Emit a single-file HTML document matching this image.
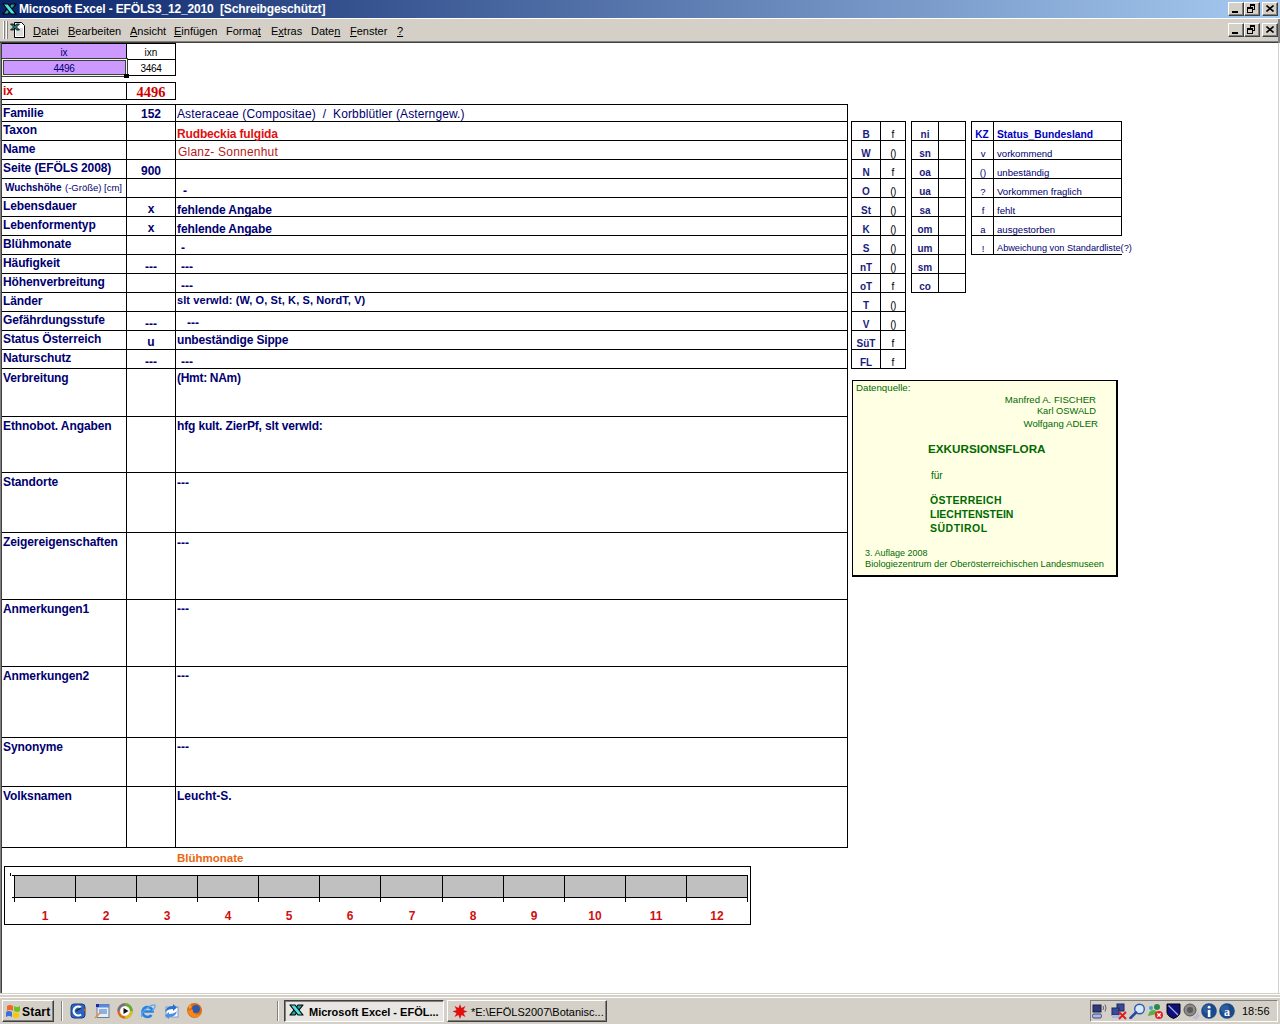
<!DOCTYPE html>
<html><head><meta charset="utf-8">
<style>
*{margin:0;padding:0;box-sizing:border-box}
html,body{width:1280px;height:1024px;overflow:hidden;background:#fff;font-family:"Liberation Sans",sans-serif}
.a{position:absolute}
.t{position:absolute;white-space:pre;line-height:1}
u{text-decoration:underline;text-underline-offset:1px}
</style></head><body>

<div class="a" style="left:0px;top:0px;width:1280px;height:18px;background:linear-gradient(to right,#0a246a,#a6caf0);"></div>
<svg class="a" style="left:2px;top:3px" width="16" height="13" viewBox="0 0 16 13"><path d="M9 1h5L6 11H1z" fill="#2aa0a0" stroke="#000" stroke-width="1.2" stroke-linejoin="round"/>
<path d="M1 1h5l8 10H9z" fill="#48e4e4" stroke="#000" stroke-width="1.2" stroke-linejoin="round"/></svg>
<div class="t" style="left:19px;top:2px;font:bold 12px 'Liberation Sans',sans-serif;color:#fff;letter-spacing:-0.15px">Microsoft Excel - EFÖLS3_12_2010  [Schreibgeschützt]</div>
<div class="a" style="left:1228px;top:2px;width:16px;height:14px;background:#d4d0c8;border-top:1px solid #fff;border-left:1px solid #fff;border-right:1px solid #404040;border-bottom:1px solid #404040;box-shadow:inset -1px -1px 0 #808080"></div>
<div class="a" style="left:1232px;top:11px;width:6px;height:2px;background:#000;"></div>
<div class="a" style="left:1244px;top:2px;width:16px;height:14px;background:#d4d0c8;border-top:1px solid #fff;border-left:1px solid #fff;border-right:1px solid #404040;border-bottom:1px solid #404040;box-shadow:inset -1px -1px 0 #808080"></div>
<div class="a" style="left:1250px;top:4px;width:5px;height:6px;border:1px solid #000;border-top-width:2px"></div>
<div class="a" style="left:1247px;top:7px;width:6px;height:6px;border:1px solid #000;border-top-width:2px;background:#d4d0c8"></div>
<div class="a" style="left:1262px;top:2px;width:16px;height:14px;background:#d4d0c8;border-top:1px solid #fff;border-left:1px solid #fff;border-right:1px solid #404040;border-bottom:1px solid #404040;box-shadow:inset -1px -1px 0 #808080"></div>
<svg class="a" style="left:1266px;top:5px" width="8" height="7" viewBox="0 0 8 7"><path d="M0.5 0.5L7.5 6.5M7.5 0.5L0.5 6.5" stroke="#000" stroke-width="1.6"/></svg>
<div class="a" style="left:0px;top:18px;width:1280px;height:1px;background:#d4d0c8;"></div>
<div class="a" style="left:0px;top:19px;width:1280px;height:22px;background:#d4d0c8;"></div>
<div class="a" style="left:0px;top:18px;width:1280px;height:1px;background:#fff;"></div>
<div class="a" style="left:3px;top:21px;width:1px;height:18px;background:#fff;"></div>
<div class="a" style="left:4px;top:21px;width:1px;height:18px;background:#808080;"></div>
<div class="a" style="left:6px;top:21px;width:1px;height:18px;background:#fff;"></div>
<div class="a" style="left:7px;top:21px;width:1px;height:18px;background:#808080;"></div>
<svg class="a" style="left:10px;top:22px" width="18" height="17" viewBox="0 0 18 17">
<path d="M4.5 0.5h7l3 3v12h-10z" fill="#fff" stroke="#000"/>
<path d="M6 7h7M6 9h7M6 11h7M6 13h7" stroke="#b8b8b8"/>
<path d="M0.5 2h3l1.5 2 1.5-2h3l-3 3 3 3h-3l-1.5-2-1.5 2h-3l3-3z" fill="#1a8080" stroke="#000" stroke-width="0.8"/>
</svg>
<div class="t" style="left:33px;top:25px;font:normal 11px 'Liberation Sans',sans-serif;color:#000;"><u>D</u>atei</div>
<div class="t" style="left:68px;top:25px;font:normal 11px 'Liberation Sans',sans-serif;color:#000;"><u>B</u>earbeiten</div>
<div class="t" style="left:130px;top:25px;font:normal 11px 'Liberation Sans',sans-serif;color:#000;"><u>A</u>nsicht</div>
<div class="t" style="left:174px;top:25px;font:normal 11px 'Liberation Sans',sans-serif;color:#000;"><u>E</u>infügen</div>
<div class="t" style="left:226px;top:25px;font:normal 11px 'Liberation Sans',sans-serif;color:#000;">Forma<u>t</u></div>
<div class="t" style="left:271px;top:25px;font:normal 11px 'Liberation Sans',sans-serif;color:#000;">E<u>x</u>tras</div>
<div class="t" style="left:311px;top:25px;font:normal 11px 'Liberation Sans',sans-serif;color:#000;">Date<u>n</u></div>
<div class="t" style="left:350px;top:25px;font:normal 11px 'Liberation Sans',sans-serif;color:#000;"><u>F</u>enster</div>
<div class="t" style="left:397px;top:25px;font:normal 11px 'Liberation Sans',sans-serif;color:#000;"><u>?</u></div>
<div class="a" style="left:1228px;top:23px;width:16px;height:14px;background:#d4d0c8;border-top:1px solid #fff;border-left:1px solid #fff;border-right:1px solid #404040;border-bottom:1px solid #404040;box-shadow:inset -1px -1px 0 #808080"></div>
<div class="a" style="left:1232px;top:32px;width:6px;height:2px;background:#000;"></div>
<div class="a" style="left:1244px;top:23px;width:16px;height:14px;background:#d4d0c8;border-top:1px solid #fff;border-left:1px solid #fff;border-right:1px solid #404040;border-bottom:1px solid #404040;box-shadow:inset -1px -1px 0 #808080"></div>
<div class="a" style="left:1250px;top:25px;width:5px;height:6px;border:1px solid #000;border-top-width:2px"></div>
<div class="a" style="left:1247px;top:28px;width:6px;height:6px;border:1px solid #000;border-top-width:2px;background:#d4d0c8"></div>
<div class="a" style="left:1262px;top:23px;width:16px;height:14px;background:#d4d0c8;border-top:1px solid #fff;border-left:1px solid #fff;border-right:1px solid #404040;border-bottom:1px solid #404040;box-shadow:inset -1px -1px 0 #808080"></div>
<svg class="a" style="left:1266px;top:26px" width="8" height="7" viewBox="0 0 8 7"><path d="M0.5 0.5L7.5 6.5M7.5 0.5L0.5 6.5" stroke="#000" stroke-width="1.6"/></svg>
<div class="a" style="left:0px;top:40px;width:1280px;height:1px;background:#d4d0c8;"></div>
<div class="a" style="left:0px;top:41px;width:1278px;height:1px;background:#808080;"></div>
<div class="a" style="left:0px;top:42px;width:1278px;height:1px;background:#404040;"></div>
<div class="a" style="left:1278px;top:19px;width:2px;height:24px;background:#808080;"></div>
<div class="a" style="left:0px;top:43px;width:1px;height:950px;background:#808080;"></div>
<div class="a" style="left:1px;top:43px;width:1px;height:950px;background:#404040;"></div>
<div class="a" style="left:1278px;top:43px;width:1px;height:950px;background:#d4d0c8;"></div>
<div class="a" style="left:1279px;top:43px;width:1px;height:950px;background:#fff;"></div>
<div class="a" style="left:0px;top:993px;width:1280px;height:1px;background:#d4d0c8;"></div>
<div class="a" style="left:0px;top:994px;width:1280px;height:1px;background:#fff;"></div>
<div class="a" style="left:2px;top:43px;width:124px;height:16px;background:#cc99ff;"></div>
<div class="a" style="left:2px;top:43px;width:174px;height:1px;background:#000;"></div>
<div class="a" style="left:126px;top:59px;width:50px;height:1px;background:#000;"></div>
<div class="a" style="left:2px;top:75px;width:174px;height:1px;background:#000;"></div>
<div class="a" style="left:126px;top:43px;width:1px;height:17px;background:#000;"></div>
<div class="a" style="left:175px;top:43px;width:1px;height:33px;background:#000;"></div>
<div class="a" style="left:2px;top:59px;width:124px;height:17px;background:#cc99ff;"></div>
<div class="t" style="left:-36px;width:200px;text-align:center;top:47px;font:normal 10px 'Liberation Sans',sans-serif;color:#000070;">ix</div>
<div class="t" style="left:51px;width:200px;text-align:center;top:47px;font:normal 10px 'Liberation Sans',sans-serif;color:#000;">ixn</div>
<div class="t" style="left:-36px;width:200px;text-align:center;top:63px;font:normal 10px 'Liberation Sans',sans-serif;color:#000070;letter-spacing:-0.3px">4496</div>
<div class="t" style="left:51px;width:200px;text-align:center;top:63px;font:normal 10px 'Liberation Sans',sans-serif;color:#000;letter-spacing:-0.3px">3464</div>
<div class="a" style="left:1px;top:58px;width:127px;height:19px;border:1px solid #3a3a3a;box-shadow:inset 0 0 0 1px #f0f8e0, inset 0 0 0 2px #404040"></div>
<div class="a" style="left:124px;top:74px;width:5px;height:4px;background:#000;"></div>
<div class="a" style="left:2px;top:82px;width:174px;height:1px;background:#000;"></div>
<div class="a" style="left:2px;top:99px;width:174px;height:1px;background:#000;"></div>
<div class="a" style="left:126px;top:82px;width:1px;height:18px;background:#000;"></div>
<div class="a" style="left:175px;top:82px;width:1px;height:18px;background:#000;"></div>
<div class="t" style="left:3px;top:84px;font:bold 12px 'Liberation Sans',sans-serif;color:#d00000;">ix</div>
<div class="t" style="left:51px;width:200px;text-align:center;top:84px;font:bold 14.5px 'Liberation Serif',sans-serif;color:#d00000;">4496</div>
<div class="a" style="left:2px;top:104px;width:846px;height:1px;background:#000;"></div>
<div class="a" style="left:2px;top:121px;width:846px;height:1px;background:#000;"></div>
<div class="a" style="left:2px;top:140px;width:846px;height:1px;background:#000;"></div>
<div class="a" style="left:2px;top:159px;width:846px;height:1px;background:#000;"></div>
<div class="a" style="left:2px;top:178px;width:846px;height:1px;background:#000;"></div>
<div class="a" style="left:2px;top:197px;width:846px;height:1px;background:#000;"></div>
<div class="a" style="left:2px;top:216px;width:846px;height:1px;background:#000;"></div>
<div class="a" style="left:2px;top:235px;width:846px;height:1px;background:#000;"></div>
<div class="a" style="left:2px;top:254px;width:846px;height:1px;background:#000;"></div>
<div class="a" style="left:2px;top:273px;width:846px;height:1px;background:#000;"></div>
<div class="a" style="left:2px;top:292px;width:846px;height:1px;background:#000;"></div>
<div class="a" style="left:2px;top:311px;width:846px;height:1px;background:#000;"></div>
<div class="a" style="left:2px;top:330px;width:846px;height:1px;background:#000;"></div>
<div class="a" style="left:2px;top:349px;width:846px;height:1px;background:#000;"></div>
<div class="a" style="left:2px;top:368px;width:846px;height:1px;background:#000;"></div>
<div class="a" style="left:2px;top:416px;width:846px;height:1px;background:#000;"></div>
<div class="a" style="left:2px;top:472px;width:846px;height:1px;background:#000;"></div>
<div class="a" style="left:2px;top:532px;width:846px;height:1px;background:#000;"></div>
<div class="a" style="left:2px;top:599px;width:846px;height:1px;background:#000;"></div>
<div class="a" style="left:2px;top:666px;width:846px;height:1px;background:#000;"></div>
<div class="a" style="left:2px;top:737px;width:846px;height:1px;background:#000;"></div>
<div class="a" style="left:2px;top:786px;width:846px;height:1px;background:#000;"></div>
<div class="a" style="left:2px;top:847px;width:846px;height:1px;background:#000;"></div>
<div class="a" style="left:126px;top:104px;width:1px;height:744px;background:#000;"></div>
<div class="a" style="left:175px;top:104px;width:1px;height:744px;background:#000;"></div>
<div class="a" style="left:847px;top:104px;width:1px;height:744px;background:#000;"></div>
<div class="t" style="left:3px;top:106px;font:bold 12px 'Liberation Sans',sans-serif;color:#000070;letter-spacing:-0.1px">Familie</div>
<div class="t" style="left:3px;top:123px;font:bold 12px 'Liberation Sans',sans-serif;color:#000070;letter-spacing:-0.1px">Taxon</div>
<div class="t" style="left:3px;top:142px;font:bold 12px 'Liberation Sans',sans-serif;color:#000070;letter-spacing:-0.1px">Name</div>
<div class="t" style="left:3px;top:161px;font:bold 12px 'Liberation Sans',sans-serif;color:#000070;letter-spacing:-0.1px">Seite (EFÖLS 2008)</div>
<div class="t" style="left:5px;top:182px;font:bold 10px 'Liberation Sans',sans-serif;color:#000070;">Wuchshöhe</div>
<div class="t" style="left:65px;top:182px;font:normal 9.5px 'Liberation Sans',sans-serif;color:#000070;">(-Größe) [cm]</div>
<div class="t" style="left:3px;top:199px;font:bold 12px 'Liberation Sans',sans-serif;color:#000070;letter-spacing:-0.1px">Lebensdauer</div>
<div class="t" style="left:3px;top:218px;font:bold 12px 'Liberation Sans',sans-serif;color:#000070;letter-spacing:-0.1px">Lebenformentyp</div>
<div class="t" style="left:3px;top:237px;font:bold 12px 'Liberation Sans',sans-serif;color:#000070;letter-spacing:-0.1px">Blühmonate</div>
<div class="t" style="left:3px;top:256px;font:bold 12px 'Liberation Sans',sans-serif;color:#000070;letter-spacing:-0.1px">Häufigkeit</div>
<div class="t" style="left:3px;top:275px;font:bold 12px 'Liberation Sans',sans-serif;color:#000070;letter-spacing:-0.1px">Höhenverbreitung</div>
<div class="t" style="left:3px;top:294px;font:bold 12px 'Liberation Sans',sans-serif;color:#000070;letter-spacing:-0.1px">Länder</div>
<div class="t" style="left:3px;top:313px;font:bold 12px 'Liberation Sans',sans-serif;color:#000070;letter-spacing:-0.1px">Gefährdungsstufe</div>
<div class="t" style="left:3px;top:332px;font:bold 12px 'Liberation Sans',sans-serif;color:#000070;letter-spacing:-0.1px">Status Österreich</div>
<div class="t" style="left:3px;top:351px;font:bold 12px 'Liberation Sans',sans-serif;color:#000070;letter-spacing:-0.1px">Naturschutz</div>
<div class="t" style="left:3px;top:371px;font:bold 12px 'Liberation Sans',sans-serif;color:#000070;letter-spacing:-0.1px">Verbreitung</div>
<div class="t" style="left:3px;top:419px;font:bold 12px 'Liberation Sans',sans-serif;color:#000070;letter-spacing:-0.1px">Ethnobot. Angaben</div>
<div class="t" style="left:3px;top:475px;font:bold 12px 'Liberation Sans',sans-serif;color:#000070;letter-spacing:-0.1px">Standorte</div>
<div class="t" style="left:3px;top:535px;font:bold 12px 'Liberation Sans',sans-serif;color:#000070;letter-spacing:-0.1px">Zeigereigenschaften</div>
<div class="t" style="left:3px;top:602px;font:bold 12px 'Liberation Sans',sans-serif;color:#000070;letter-spacing:-0.1px">Anmerkungen1</div>
<div class="t" style="left:3px;top:669px;font:bold 12px 'Liberation Sans',sans-serif;color:#000070;letter-spacing:-0.1px">Anmerkungen2</div>
<div class="t" style="left:3px;top:740px;font:bold 12px 'Liberation Sans',sans-serif;color:#000070;letter-spacing:-0.1px">Synonyme</div>
<div class="t" style="left:3px;top:789px;font:bold 12px 'Liberation Sans',sans-serif;color:#000070;letter-spacing:-0.1px">Volksnamen</div>
<div class="t" style="left:51px;width:200px;text-align:center;top:107px;font:bold 12px 'Liberation Sans',sans-serif;color:#000070;">152</div>
<div class="t" style="left:51px;width:200px;text-align:center;top:164px;font:bold 12px 'Liberation Sans',sans-serif;color:#000070;">900</div>
<div class="t" style="left:51px;width:200px;text-align:center;top:202px;font:bold 12px 'Liberation Sans',sans-serif;color:#000070;">x</div>
<div class="t" style="left:51px;width:200px;text-align:center;top:221px;font:bold 12px 'Liberation Sans',sans-serif;color:#000070;">x</div>
<div class="t" style="left:51px;width:200px;text-align:center;top:260px;font:bold 12px 'Liberation Sans',sans-serif;color:#000070;">---</div>
<div class="t" style="left:51px;width:200px;text-align:center;top:317px;font:bold 12px 'Liberation Sans',sans-serif;color:#000070;">---</div>
<div class="t" style="left:51px;width:200px;text-align:center;top:335px;font:bold 12px 'Liberation Sans',sans-serif;color:#000070;">u</div>
<div class="t" style="left:51px;width:200px;text-align:center;top:355px;font:bold 12px 'Liberation Sans',sans-serif;color:#000070;">---</div>
<div class="t" style="left:177px;top:107px;font:normal 12px 'Liberation Sans',sans-serif;color:#000070;letter-spacing:0.12px">Asteraceae (Compositae)  /  Korbblütler (Asterngew.)</div>
<div class="t" style="left:177px;top:127px;font:bold 12px 'Liberation Sans',sans-serif;color:#e01010;letter-spacing:-0.15px">Rudbeckia fulgida</div>
<div class="t" style="left:178px;top:145px;font:normal 12px 'Liberation Sans',sans-serif;color:#b42020;letter-spacing:0.2px">Glanz- Sonnenhut</div>
<div class="t" style="left:183px;top:184px;font:bold 12px 'Liberation Sans',sans-serif;color:#000070;">-</div>
<div class="t" style="left:177px;top:203px;font:bold 12px 'Liberation Sans',sans-serif;color:#000070;letter-spacing:-0.1px">fehlende Angabe</div>
<div class="t" style="left:177px;top:222px;font:bold 12px 'Liberation Sans',sans-serif;color:#000070;letter-spacing:-0.1px">fehlende Angabe</div>
<div class="t" style="left:181px;top:241px;font:bold 12px 'Liberation Sans',sans-serif;color:#000070;">-</div>
<div class="t" style="left:181px;top:260px;font:bold 12px 'Liberation Sans',sans-serif;color:#000070;">---</div>
<div class="t" style="left:181px;top:279px;font:bold 12px 'Liberation Sans',sans-serif;color:#000070;">---</div>
<div class="t" style="left:177px;top:294px;font:bold 11px 'Liberation Sans',sans-serif;color:#000070;letter-spacing:0.1px">slt verwld: (W, O, St, K, S, NordT, V)</div>
<div class="t" style="left:187px;top:316px;font:bold 12px 'Liberation Sans',sans-serif;color:#000070;">---</div>
<div class="t" style="left:177px;top:333px;font:bold 12px 'Liberation Sans',sans-serif;color:#000070;letter-spacing:-0.15px">unbeständige Sippe</div>
<div class="t" style="left:181px;top:355px;font:bold 12px 'Liberation Sans',sans-serif;color:#000070;">---</div>
<div class="t" style="left:177px;top:371px;font:bold 12px 'Liberation Sans',sans-serif;color:#000070;letter-spacing:-0.3px">(Hmt: NAm)</div>
<div class="t" style="left:177px;top:419px;font:bold 12px 'Liberation Sans',sans-serif;color:#000070;letter-spacing:-0.15px">hfg kult. ZierPf, slt verwld:</div>
<div class="t" style="left:177px;top:476px;font:bold 12px 'Liberation Sans',sans-serif;color:#000070;">---</div>
<div class="t" style="left:177px;top:536px;font:bold 12px 'Liberation Sans',sans-serif;color:#000070;">---</div>
<div class="t" style="left:177px;top:602px;font:bold 12px 'Liberation Sans',sans-serif;color:#000070;">---</div>
<div class="t" style="left:177px;top:669px;font:bold 12px 'Liberation Sans',sans-serif;color:#000070;">---</div>
<div class="t" style="left:177px;top:740px;font:bold 12px 'Liberation Sans',sans-serif;color:#000070;">---</div>
<div class="t" style="left:177px;top:789px;font:bold 12px 'Liberation Sans',sans-serif;color:#000070;">Leucht-S.</div>
<div class="a" style="left:851px;top:121px;width:55px;height:1px;background:#000;"></div>
<div class="a" style="left:851px;top:140px;width:55px;height:1px;background:#000;"></div>
<div class="a" style="left:851px;top:159px;width:55px;height:1px;background:#000;"></div>
<div class="a" style="left:851px;top:178px;width:55px;height:1px;background:#000;"></div>
<div class="a" style="left:851px;top:197px;width:55px;height:1px;background:#000;"></div>
<div class="a" style="left:851px;top:216px;width:55px;height:1px;background:#000;"></div>
<div class="a" style="left:851px;top:235px;width:55px;height:1px;background:#000;"></div>
<div class="a" style="left:851px;top:254px;width:55px;height:1px;background:#000;"></div>
<div class="a" style="left:851px;top:273px;width:55px;height:1px;background:#000;"></div>
<div class="a" style="left:851px;top:292px;width:55px;height:1px;background:#000;"></div>
<div class="a" style="left:851px;top:311px;width:55px;height:1px;background:#000;"></div>
<div class="a" style="left:851px;top:330px;width:55px;height:1px;background:#000;"></div>
<div class="a" style="left:851px;top:349px;width:55px;height:1px;background:#000;"></div>
<div class="a" style="left:851px;top:368px;width:55px;height:1px;background:#000;"></div>
<div class="a" style="left:851px;top:121px;width:1px;height:248px;background:#000;"></div>
<div class="a" style="left:880px;top:121px;width:1px;height:248px;background:#000;"></div>
<div class="a" style="left:905px;top:121px;width:1px;height:248px;background:#000;"></div>
<div class="t" style="left:766px;width:200px;text-align:center;top:129px;font:bold 10px 'Liberation Sans',sans-serif;color:#1c1c7c;">B</div>
<div class="t" style="left:793px;width:200px;text-align:center;top:129px;font:normal 10px 'Liberation Sans',sans-serif;color:#000;">f</div>
<div class="t" style="left:766px;width:200px;text-align:center;top:148px;font:bold 10px 'Liberation Sans',sans-serif;color:#1c1c7c;">W</div>
<div class="t" style="left:793px;width:200px;text-align:center;top:148px;font:normal 10px 'Liberation Sans',sans-serif;color:#000;letter-spacing:-0.6px">()</div>
<div class="t" style="left:766px;width:200px;text-align:center;top:167px;font:bold 10px 'Liberation Sans',sans-serif;color:#1c1c7c;">N</div>
<div class="t" style="left:793px;width:200px;text-align:center;top:167px;font:normal 10px 'Liberation Sans',sans-serif;color:#000;">f</div>
<div class="t" style="left:766px;width:200px;text-align:center;top:186px;font:bold 10px 'Liberation Sans',sans-serif;color:#1c1c7c;">O</div>
<div class="t" style="left:793px;width:200px;text-align:center;top:186px;font:normal 10px 'Liberation Sans',sans-serif;color:#000;letter-spacing:-0.6px">()</div>
<div class="t" style="left:766px;width:200px;text-align:center;top:205px;font:bold 10px 'Liberation Sans',sans-serif;color:#1c1c7c;">St</div>
<div class="t" style="left:793px;width:200px;text-align:center;top:205px;font:normal 10px 'Liberation Sans',sans-serif;color:#000;letter-spacing:-0.6px">()</div>
<div class="t" style="left:766px;width:200px;text-align:center;top:224px;font:bold 10px 'Liberation Sans',sans-serif;color:#1c1c7c;">K</div>
<div class="t" style="left:793px;width:200px;text-align:center;top:224px;font:normal 10px 'Liberation Sans',sans-serif;color:#000;letter-spacing:-0.6px">()</div>
<div class="t" style="left:766px;width:200px;text-align:center;top:243px;font:bold 10px 'Liberation Sans',sans-serif;color:#1c1c7c;">S</div>
<div class="t" style="left:793px;width:200px;text-align:center;top:243px;font:normal 10px 'Liberation Sans',sans-serif;color:#000;letter-spacing:-0.6px">()</div>
<div class="t" style="left:766px;width:200px;text-align:center;top:262px;font:bold 10px 'Liberation Sans',sans-serif;color:#1c1c7c;">nT</div>
<div class="t" style="left:793px;width:200px;text-align:center;top:262px;font:normal 10px 'Liberation Sans',sans-serif;color:#000;letter-spacing:-0.6px">()</div>
<div class="t" style="left:766px;width:200px;text-align:center;top:281px;font:bold 10px 'Liberation Sans',sans-serif;color:#1c1c7c;">oT</div>
<div class="t" style="left:793px;width:200px;text-align:center;top:281px;font:normal 10px 'Liberation Sans',sans-serif;color:#000;">f</div>
<div class="t" style="left:766px;width:200px;text-align:center;top:300px;font:bold 10px 'Liberation Sans',sans-serif;color:#1c1c7c;">T</div>
<div class="t" style="left:793px;width:200px;text-align:center;top:300px;font:normal 10px 'Liberation Sans',sans-serif;color:#000;letter-spacing:-0.6px">()</div>
<div class="t" style="left:766px;width:200px;text-align:center;top:319px;font:bold 10px 'Liberation Sans',sans-serif;color:#1c1c7c;">V</div>
<div class="t" style="left:793px;width:200px;text-align:center;top:319px;font:normal 10px 'Liberation Sans',sans-serif;color:#000;letter-spacing:-0.6px">()</div>
<div class="t" style="left:766px;width:200px;text-align:center;top:338px;font:bold 10px 'Liberation Sans',sans-serif;color:#1c1c7c;">SüT</div>
<div class="t" style="left:793px;width:200px;text-align:center;top:338px;font:normal 10px 'Liberation Sans',sans-serif;color:#000;">f</div>
<div class="t" style="left:766px;width:200px;text-align:center;top:357px;font:bold 10px 'Liberation Sans',sans-serif;color:#1c1c7c;">FL</div>
<div class="t" style="left:793px;width:200px;text-align:center;top:357px;font:normal 10px 'Liberation Sans',sans-serif;color:#000;">f</div>
<div class="a" style="left:911px;top:121px;width:55px;height:1px;background:#000;"></div>
<div class="a" style="left:911px;top:140px;width:55px;height:1px;background:#000;"></div>
<div class="a" style="left:911px;top:159px;width:55px;height:1px;background:#000;"></div>
<div class="a" style="left:911px;top:178px;width:55px;height:1px;background:#000;"></div>
<div class="a" style="left:911px;top:197px;width:55px;height:1px;background:#000;"></div>
<div class="a" style="left:911px;top:216px;width:55px;height:1px;background:#000;"></div>
<div class="a" style="left:911px;top:235px;width:55px;height:1px;background:#000;"></div>
<div class="a" style="left:911px;top:254px;width:55px;height:1px;background:#000;"></div>
<div class="a" style="left:911px;top:273px;width:55px;height:1px;background:#000;"></div>
<div class="a" style="left:911px;top:292px;width:55px;height:1px;background:#000;"></div>
<div class="a" style="left:911px;top:121px;width:1px;height:172px;background:#000;"></div>
<div class="a" style="left:938px;top:121px;width:1px;height:172px;background:#000;"></div>
<div class="a" style="left:965px;top:121px;width:1px;height:172px;background:#000;"></div>
<div class="t" style="left:825px;width:200px;text-align:center;top:129px;font:bold 10px 'Liberation Sans',sans-serif;color:#1c1c7c;">ni</div>
<div class="t" style="left:825px;width:200px;text-align:center;top:148px;font:bold 10px 'Liberation Sans',sans-serif;color:#1c1c7c;">sn</div>
<div class="t" style="left:825px;width:200px;text-align:center;top:167px;font:bold 10px 'Liberation Sans',sans-serif;color:#1c1c7c;">oa</div>
<div class="t" style="left:825px;width:200px;text-align:center;top:186px;font:bold 10px 'Liberation Sans',sans-serif;color:#1c1c7c;">ua</div>
<div class="t" style="left:825px;width:200px;text-align:center;top:205px;font:bold 10px 'Liberation Sans',sans-serif;color:#1c1c7c;">sa</div>
<div class="t" style="left:825px;width:200px;text-align:center;top:224px;font:bold 10px 'Liberation Sans',sans-serif;color:#1c1c7c;">om</div>
<div class="t" style="left:825px;width:200px;text-align:center;top:243px;font:bold 10px 'Liberation Sans',sans-serif;color:#1c1c7c;">um</div>
<div class="t" style="left:825px;width:200px;text-align:center;top:262px;font:bold 10px 'Liberation Sans',sans-serif;color:#1c1c7c;">sm</div>
<div class="t" style="left:825px;width:200px;text-align:center;top:281px;font:bold 10px 'Liberation Sans',sans-serif;color:#1c1c7c;">co</div>
<div class="a" style="left:971px;top:121px;width:151px;height:1px;background:#000;"></div>
<div class="a" style="left:971px;top:140px;width:151px;height:1px;background:#000;"></div>
<div class="a" style="left:971px;top:159px;width:151px;height:1px;background:#000;"></div>
<div class="a" style="left:971px;top:178px;width:151px;height:1px;background:#000;"></div>
<div class="a" style="left:971px;top:197px;width:151px;height:1px;background:#000;"></div>
<div class="a" style="left:971px;top:216px;width:151px;height:1px;background:#000;"></div>
<div class="a" style="left:971px;top:235px;width:151px;height:1px;background:#000;"></div>
<div class="a" style="left:971px;top:254px;width:151px;height:1px;background:#000;"></div>
<div class="a" style="left:971px;top:121px;width:1px;height:134px;background:#000;"></div>
<div class="a" style="left:993px;top:121px;width:1px;height:134px;background:#000;"></div>
<div class="a" style="left:1121px;top:121px;width:1px;height:115px;background:#000;"></div>
<div class="t" style="left:882px;width:200px;text-align:center;top:129px;font:bold 10px 'Liberation Sans',sans-serif;color:#0000c0;">KZ</div>
<div class="t" style="left:997px;top:129px;font:bold 10.3px 'Liberation Sans',sans-serif;color:#0000c0;">Status_Bundesland</div>
<div class="t" style="left:883px;width:200px;text-align:center;top:148px;font:normal 9.5px 'Liberation Sans',sans-serif;color:#000070;">v</div>
<div class="t" style="left:997px;top:148px;font:normal 9.6px 'Liberation Sans',sans-serif;color:#000070;">vorkommend</div>
<div class="t" style="left:883px;width:200px;text-align:center;top:167px;font:normal 9.5px 'Liberation Sans',sans-serif;color:#000070;">()</div>
<div class="t" style="left:997px;top:167px;font:normal 9.6px 'Liberation Sans',sans-serif;color:#000070;">unbeständig</div>
<div class="t" style="left:883px;width:200px;text-align:center;top:186px;font:normal 9.5px 'Liberation Sans',sans-serif;color:#000070;">?</div>
<div class="t" style="left:997px;top:186px;font:normal 9.6px 'Liberation Sans',sans-serif;color:#000070;">Vorkommen fraglich</div>
<div class="t" style="left:883px;width:200px;text-align:center;top:205px;font:normal 9.5px 'Liberation Sans',sans-serif;color:#000070;">f</div>
<div class="t" style="left:997px;top:205px;font:normal 9.6px 'Liberation Sans',sans-serif;color:#000070;">fehlt</div>
<div class="t" style="left:883px;width:200px;text-align:center;top:224px;font:normal 9.5px 'Liberation Sans',sans-serif;color:#000070;">a</div>
<div class="t" style="left:997px;top:224px;font:normal 9.6px 'Liberation Sans',sans-serif;color:#000070;">ausgestorben</div>
<div class="t" style="left:883px;width:200px;text-align:center;top:243px;font:normal 9.5px 'Liberation Sans',sans-serif;color:#000070;">!</div>
<div class="t" style="left:997px;top:243px;font:normal 9.2px 'Liberation Sans',sans-serif;color:#000070;">Abweichung von Standardliste(?)</div>
<div class="a" style="left:852px;top:380px;width:266px;height:197px;background:#ffffe4;border:1px solid #000;border-right-width:2px;border-bottom-width:2px"></div>
<div class="t" style="left:856px;top:382px;font:normal 9.7px 'Liberation Sans',sans-serif;color:#006a00;">Datenquelle:</div>
<div class="t" style="left:696px;width:400px;text-align:right;top:394px;font:normal 9.6px 'Liberation Sans',sans-serif;color:#006a00;">Manfred A. FISCHER</div>
<div class="t" style="left:696px;width:400px;text-align:right;top:406px;font:normal 9.3px 'Liberation Sans',sans-serif;color:#006a00;">Karl OSWALD</div>
<div class="t" style="left:698px;width:400px;text-align:right;top:418px;font:normal 9.6px 'Liberation Sans',sans-serif;color:#006a00;">Wolfgang ADLER</div>
<div class="t" style="left:928px;top:442px;font:bold 11.7px 'Liberation Sans',sans-serif;color:#006a00;">EXKURSIONSFLORA</div>
<div class="t" style="left:931px;top:470px;font:normal 10px 'Liberation Sans',sans-serif;color:#006a00;">für</div>
<div class="t" style="left:930px;top:494px;font:bold 10.5px 'Liberation Sans',sans-serif;color:#006a00;letter-spacing:0.3px">ÖSTERREICH</div>
<div class="t" style="left:930px;top:508px;font:bold 10.5px 'Liberation Sans',sans-serif;color:#006a00;">LIECHTENSTEIN</div>
<div class="t" style="left:930px;top:522px;font:bold 10.5px 'Liberation Sans',sans-serif;color:#006a00;letter-spacing:0.5px">SÜDTIROL</div>
<div class="t" style="left:865px;top:548px;font:normal 9px 'Liberation Sans',sans-serif;color:#006a00;">3. Auflage 2008</div>
<div class="t" style="left:865px;top:559px;font:normal 9.28px 'Liberation Sans',sans-serif;color:#006a00;">Biologiezentrum der Oberösterreichischen Landesmuseen</div>
<div class="t" style="left:177px;top:852px;font:bold 11.5px 'Liberation Sans',sans-serif;color:#e86810;">Blühmonate</div>
<div class="a" style="left:4px;top:866px;width:747px;height:59px;border:1px solid #000"></div>
<div class="a" style="left:14px;top:875px;width:734px;height:23px;background:#c0c0c0;"></div>
<div class="a" style="left:14px;top:875px;width:734px;height:1px;background:#000;"></div>
<div class="a" style="left:14px;top:897px;width:734px;height:1px;background:#000;"></div>
<div class="a" style="left:14px;top:875px;width:1px;height:27px;background:#000;"></div>
<div class="t" style="left:-55px;width:200px;text-align:center;top:909px;font:bold 12px 'Liberation Sans',sans-serif;color:#d01010;">1</div>
<div class="a" style="left:75px;top:875px;width:1px;height:27px;background:#000;"></div>
<div class="t" style="left:6px;width:200px;text-align:center;top:909px;font:bold 12px 'Liberation Sans',sans-serif;color:#d01010;">2</div>
<div class="a" style="left:136px;top:875px;width:1px;height:27px;background:#000;"></div>
<div class="t" style="left:67px;width:200px;text-align:center;top:909px;font:bold 12px 'Liberation Sans',sans-serif;color:#d01010;">3</div>
<div class="a" style="left:197px;top:875px;width:1px;height:27px;background:#000;"></div>
<div class="t" style="left:128px;width:200px;text-align:center;top:909px;font:bold 12px 'Liberation Sans',sans-serif;color:#d01010;">4</div>
<div class="a" style="left:258px;top:875px;width:1px;height:27px;background:#000;"></div>
<div class="t" style="left:189px;width:200px;text-align:center;top:909px;font:bold 12px 'Liberation Sans',sans-serif;color:#d01010;">5</div>
<div class="a" style="left:319px;top:875px;width:1px;height:27px;background:#000;"></div>
<div class="t" style="left:250px;width:200px;text-align:center;top:909px;font:bold 12px 'Liberation Sans',sans-serif;color:#d01010;">6</div>
<div class="a" style="left:380px;top:875px;width:1px;height:27px;background:#000;"></div>
<div class="t" style="left:312px;width:200px;text-align:center;top:909px;font:bold 12px 'Liberation Sans',sans-serif;color:#d01010;">7</div>
<div class="a" style="left:442px;top:875px;width:1px;height:27px;background:#000;"></div>
<div class="t" style="left:373px;width:200px;text-align:center;top:909px;font:bold 12px 'Liberation Sans',sans-serif;color:#d01010;">8</div>
<div class="a" style="left:503px;top:875px;width:1px;height:27px;background:#000;"></div>
<div class="t" style="left:434px;width:200px;text-align:center;top:909px;font:bold 12px 'Liberation Sans',sans-serif;color:#d01010;">9</div>
<div class="a" style="left:564px;top:875px;width:1px;height:27px;background:#000;"></div>
<div class="t" style="left:495px;width:200px;text-align:center;top:909px;font:bold 12px 'Liberation Sans',sans-serif;color:#d01010;">10</div>
<div class="a" style="left:625px;top:875px;width:1px;height:27px;background:#000;"></div>
<div class="t" style="left:556px;width:200px;text-align:center;top:909px;font:bold 12px 'Liberation Sans',sans-serif;color:#d01010;">11</div>
<div class="a" style="left:686px;top:875px;width:1px;height:27px;background:#000;"></div>
<div class="t" style="left:617px;width:200px;text-align:center;top:909px;font:bold 12px 'Liberation Sans',sans-serif;color:#d01010;">12</div>
<div class="a" style="left:747px;top:875px;width:1px;height:27px;background:#000;"></div>
<div class="a" style="left:12px;top:875px;width:3px;height:1px;background:#000;"></div>
<div class="a" style="left:12px;top:897px;width:3px;height:1px;background:#000;"></div>
<div class="a" style="left:10px;top:873px;width:1px;height:3px;background:#000;"></div>
<div class="a" style="left:0px;top:995px;width:1280px;height:29px;background:#d4d0c8;"></div>
<div class="a" style="left:0px;top:997px;width:1280px;height:1px;background:#fff;"></div>
<div class="a" style="left:2px;top:1000px;width:52px;height:22px;background:#d4d0c8;border-top:1px solid #fff;border-left:1px solid #fff;border-right:1px solid #404040;border-bottom:1px solid #404040;box-shadow:inset -1px -1px 0 #808080"></div>
<svg class="a" style="left:5px;top:1003px" width="16" height="16" viewBox="0 0 16 16">
<path d="M2 3q3-2 6 0v5q-3-2-6 0z" fill="#f06a20"/>
<path d="M9 3q3 2 6 0v5q-3 2-6 0z" fill="#70c020"/>
<path d="M1 9q3-2 6 0v5q-3-2-6 0z" fill="#3a70e0"/>
<path d="M8 9q3 2 6 0v5q-3 2-6 0z" fill="#f8c800"/>
</svg>
<div class="t" style="left:22px;top:1005px;font:bold 12px 'Liberation Sans',sans-serif;color:#000;letter-spacing:0.2px">Start</div>
<div class="a" style="left:61px;top:1001px;width:1px;height:20px;background:#808080;"></div>
<div class="a" style="left:62px;top:1001px;width:1px;height:20px;background:#fff;"></div>
<div class="a" style="left:277px;top:1001px;width:1px;height:20px;background:#808080;"></div>
<div class="a" style="left:278px;top:1001px;width:1px;height:20px;background:#fff;"></div>
<svg class="a" style="left:70px;top:1003px" width="17" height="16" viewBox="0 0 17 16">
<rect x="1" y="1" width="14" height="14" rx="3" fill="#2a64c0" stroke="#1a3a80"/>
<path d="M11 4.5A4.5 4.5 0 1 0 11 11.5" fill="none" stroke="#fff" stroke-width="2.2"/>
<path d="M6 8l5-3" stroke="#222" stroke-width="1.2"/><circle cx="15" cy="7" r="1.2" fill="#e06020"/>
</svg>
<svg class="a" style="left:94px;top:1003px" width="16" height="16" viewBox="0 0 16 16">
<rect x="3" y="1.5" width="12" height="13" fill="#e8ecf4" stroke="#6a7a9a"/>
<rect x="3" y="1.5" width="12" height="3" fill="#5a8ae0"/>
<rect x="5" y="6" width="8" height="5" fill="#8ab0e8"/>
<rect x="2" y="1" width="3" height="3" fill="#1a2aa0"/>
<path d="M1 15l6-6" stroke="#e09040" stroke-width="1.6"/>
</svg>
<svg class="a" style="left:117px;top:1003px" width="16" height="16" viewBox="0 0 16 16">
<circle cx="8" cy="8" r="6.5" fill="none" stroke="#e06a10" stroke-width="2.4"/>
<path d="M14.5 8A6.5 6.5 0 0 1 8 14.5" fill="none" stroke="#d8c020" stroke-width="2.4"/>
<path d="M8 1.5A6.5 6.5 0 0 1 14.5 8" fill="none" stroke="#58b030" stroke-width="2.4"/>
<path d="M1.5 8A6.5 6.5 0 0 1 8 1.5" fill="none" stroke="#3070d0" stroke-width="2.4" opacity="0.6"/>
<circle cx="8" cy="8" r="4.6" fill="#fff"/>
<path d="M6.5 5v6l5-3z" fill="#111"/>
</svg>
<svg class="a" style="left:140px;top:1003px" width="16" height="16" viewBox="0 0 16 16">
<path d="M3 8.5h9.5A5 5 0 1 0 11.5 12" fill="none" stroke="#2a80e0" stroke-width="2.6"/>
<path d="M2 14q-2-3 4-8t9-4q1 2-3 6" fill="none" stroke="#5aa8f0" stroke-width="1.2"/>
</svg>
<svg class="a" style="left:163px;top:1003px" width="16" height="16" viewBox="0 0 16 16">
<rect x="3" y="4" width="12" height="10" fill="#fff" stroke="#7a9ad0"/>
<path d="M2 9q1-6 8-6l0-2 4 3.5-4 3.5v-2q-5 0-8 3z" fill="#2a70d0"/>
<path d="M14 8q-1 6-8 6v2l-4-3.5 4-3.5v2q5 0 8-3z" fill="#4a90e0"/>
</svg>
<svg class="a" style="left:186px;top:1002px" width="17" height="17" viewBox="0 0 17 17">
<circle cx="8.5" cy="8.5" r="7.5" fill="#e06a10"/>
<circle cx="10" cy="7" r="4" fill="#2a5ab0"/>
<path d="M1.5 9q2 6 8 6.5q5-0.5 6.5-5q-3 3-6 2q-4-1-3-5q-3 0-5.5 1.5z" fill="#f08a20"/>
<path d="M4 2q-2 2-1 5l3-2z" fill="#f0a030"/>
</svg>
<div class="a" style="left:284px;top:1000px;width:160px;height:22px;background:#e8e6e2;border-top:1px solid #404040;border-left:1px solid #404040;border-right:1px solid #fff;border-bottom:1px solid #fff;box-shadow:inset 1px 1px 0 #808080"></div>
<svg class="a" style="left:289px;top:1004px" width="16" height="13" viewBox="0 0 16 13"><path d="M9 1h5L6 11H1z" fill="#2aa0a0" stroke="#000" stroke-width="1.2" stroke-linejoin="round"/>
<path d="M1 1h5l8 10H9z" fill="#48e4e4" stroke="#000" stroke-width="1.2" stroke-linejoin="round"/></svg>
<div class="t" style="left:309px;top:1006px;font:bold 11px 'Liberation Sans',sans-serif;color:#000;">Microsoft Excel - EFÖL...</div>
<div class="a" style="left:447px;top:1000px;width:160px;height:22px;background:#d4d0c8;border-top:1px solid #fff;border-left:1px solid #fff;border-right:1px solid #404040;border-bottom:1px solid #404040;box-shadow:inset -1px -1px 0 #808080"></div>
<svg class="a" style="left:452px;top:1003px" width="16" height="16" viewBox="0 0 16 16">
<path d="M8 1l1.5 4 4-2-2 4 4 1.5-4 1.5 2 4-4-2L8 16l-1.5-4-4 2 2-4L0.5 8.5l4-1.5-2-4 4 2z" fill="#e01010"/>
</svg>
<div class="t" style="left:471px;top:1006px;font:normal 11px 'Liberation Sans',sans-serif;color:#000;">*E:\EFÖLS2007\Botanisc...</div>
<div class="a" style="left:1090px;top:1000px;width:188px;height:22px;border-top:1px solid #808080;border-left:1px solid #808080;border-right:1px solid #fff;border-bottom:1px solid #fff"></div>
<svg class="a" style="left:1092px;top:1003px" width="17" height="16" viewBox="0 0 17 16">
<rect x="1" y="2" width="8" height="7" fill="#2a3a7a" stroke="#1a1a4a"/>
<rect x="0.5" y="11" width="9" height="4" rx="1.5" fill="#b0b8e0" stroke="#3a4a8a"/>
<path d="M11 3q1 2 0 4M13 1.5q2 3.5 0 7" fill="none" stroke="#555" stroke-width="0.9"/>
</svg>
<svg class="a" style="left:1111px;top:1003px" width="17" height="17" viewBox="0 0 17 17">
<rect x="6" y="1" width="7" height="7" fill="#3a4a9a" stroke="#1a2a5a"/>
<rect x="1" y="5" width="7" height="7" fill="#3a4a9a" stroke="#1a2a5a"/>
<rect x="1" y="12" width="8" height="3" fill="#b0b8e0"/>
<path d="M8 9l7 7M15 9l-7 7" stroke="#e02020" stroke-width="2"/>
</svg>
<svg class="a" style="left:1129px;top:1003px" width="17" height="16" viewBox="0 0 17 16">
<circle cx="10.5" cy="6" r="4.8" fill="#d8e8f8" stroke="#2a5ab0" stroke-width="1.4"/>
<path d="M7 9.5L1.5 15" stroke="#2a4aa0" stroke-width="2.6" stroke-linecap="round"/>
</svg>
<svg class="a" style="left:1147px;top:1003px" width="17" height="16" viewBox="0 0 17 16">
<circle cx="10" cy="4" r="3" fill="#2a8a4a"/><circle cx="4" cy="5" r="2" fill="#4a9ae0"/>
<path d="M1 13q1-6 5-6t4 4z" fill="#58b040"/>
<circle cx="12" cy="12" r="4" fill="#e02020"/>
<path d="M10.3 10.3l3.4 3.4M13.7 10.3l-3.4 3.4" stroke="#fff" stroke-width="1.3"/>
</svg>
<svg class="a" style="left:1166px;top:1003px" width="15" height="16" viewBox="0 0 15 16">
<path d="M1 1h13v8q0 4-6.5 6.5Q1 13 1 9z" fill="#10107a" stroke="#000" stroke-width="1"/>
<path d="M2.5 2.5L12 12" stroke="#a0b0f0" stroke-width="1.2"/>
</svg>
<svg class="a" style="left:1183px;top:1003px" width="17" height="17" viewBox="0 0 17 17">
<circle cx="7" cy="7" r="6" fill="#8a8a8a" stroke="#555"/>
<circle cx="7" cy="7" r="3" fill="#5a5a5a"/>
<path d="M10 15q4-1 5-5M12 16q3-1 4-4" fill="none" stroke="#a0a0e0" stroke-width="0.9"/>
</svg>
<svg class="a" style="left:1201px;top:1003px" width="17" height="17" viewBox="0 0 17 17">
<circle cx="8" cy="8" r="7.8" fill="#1a4a8a"/>
<circle cx="6" cy="6" r="4" fill="#3a6aa8" opacity="0.6"/>
<rect x="6.8" y="7" width="2.6" height="7" fill="#fff"/><circle cx="8.1" cy="4.2" r="1.4" fill="#fff"/>
</svg>
<svg class="a" style="left:1219px;top:1003px" width="17" height="17" viewBox="0 0 17 17">
<circle cx="8" cy="8" r="7.8" fill="#1a4a8a"/>
<circle cx="6" cy="6" r="4" fill="#3a6aa8" opacity="0.6"/>
<text x="8" y="13" text-anchor="middle" font-family="Liberation Serif" font-weight="bold" font-size="12" fill="#fff">a</text>
</svg>
<div class="t" style="left:1242px;top:1005px;font:normal 11px 'Liberation Sans',sans-serif;color:#000;">18:56</div>
</body></html>
